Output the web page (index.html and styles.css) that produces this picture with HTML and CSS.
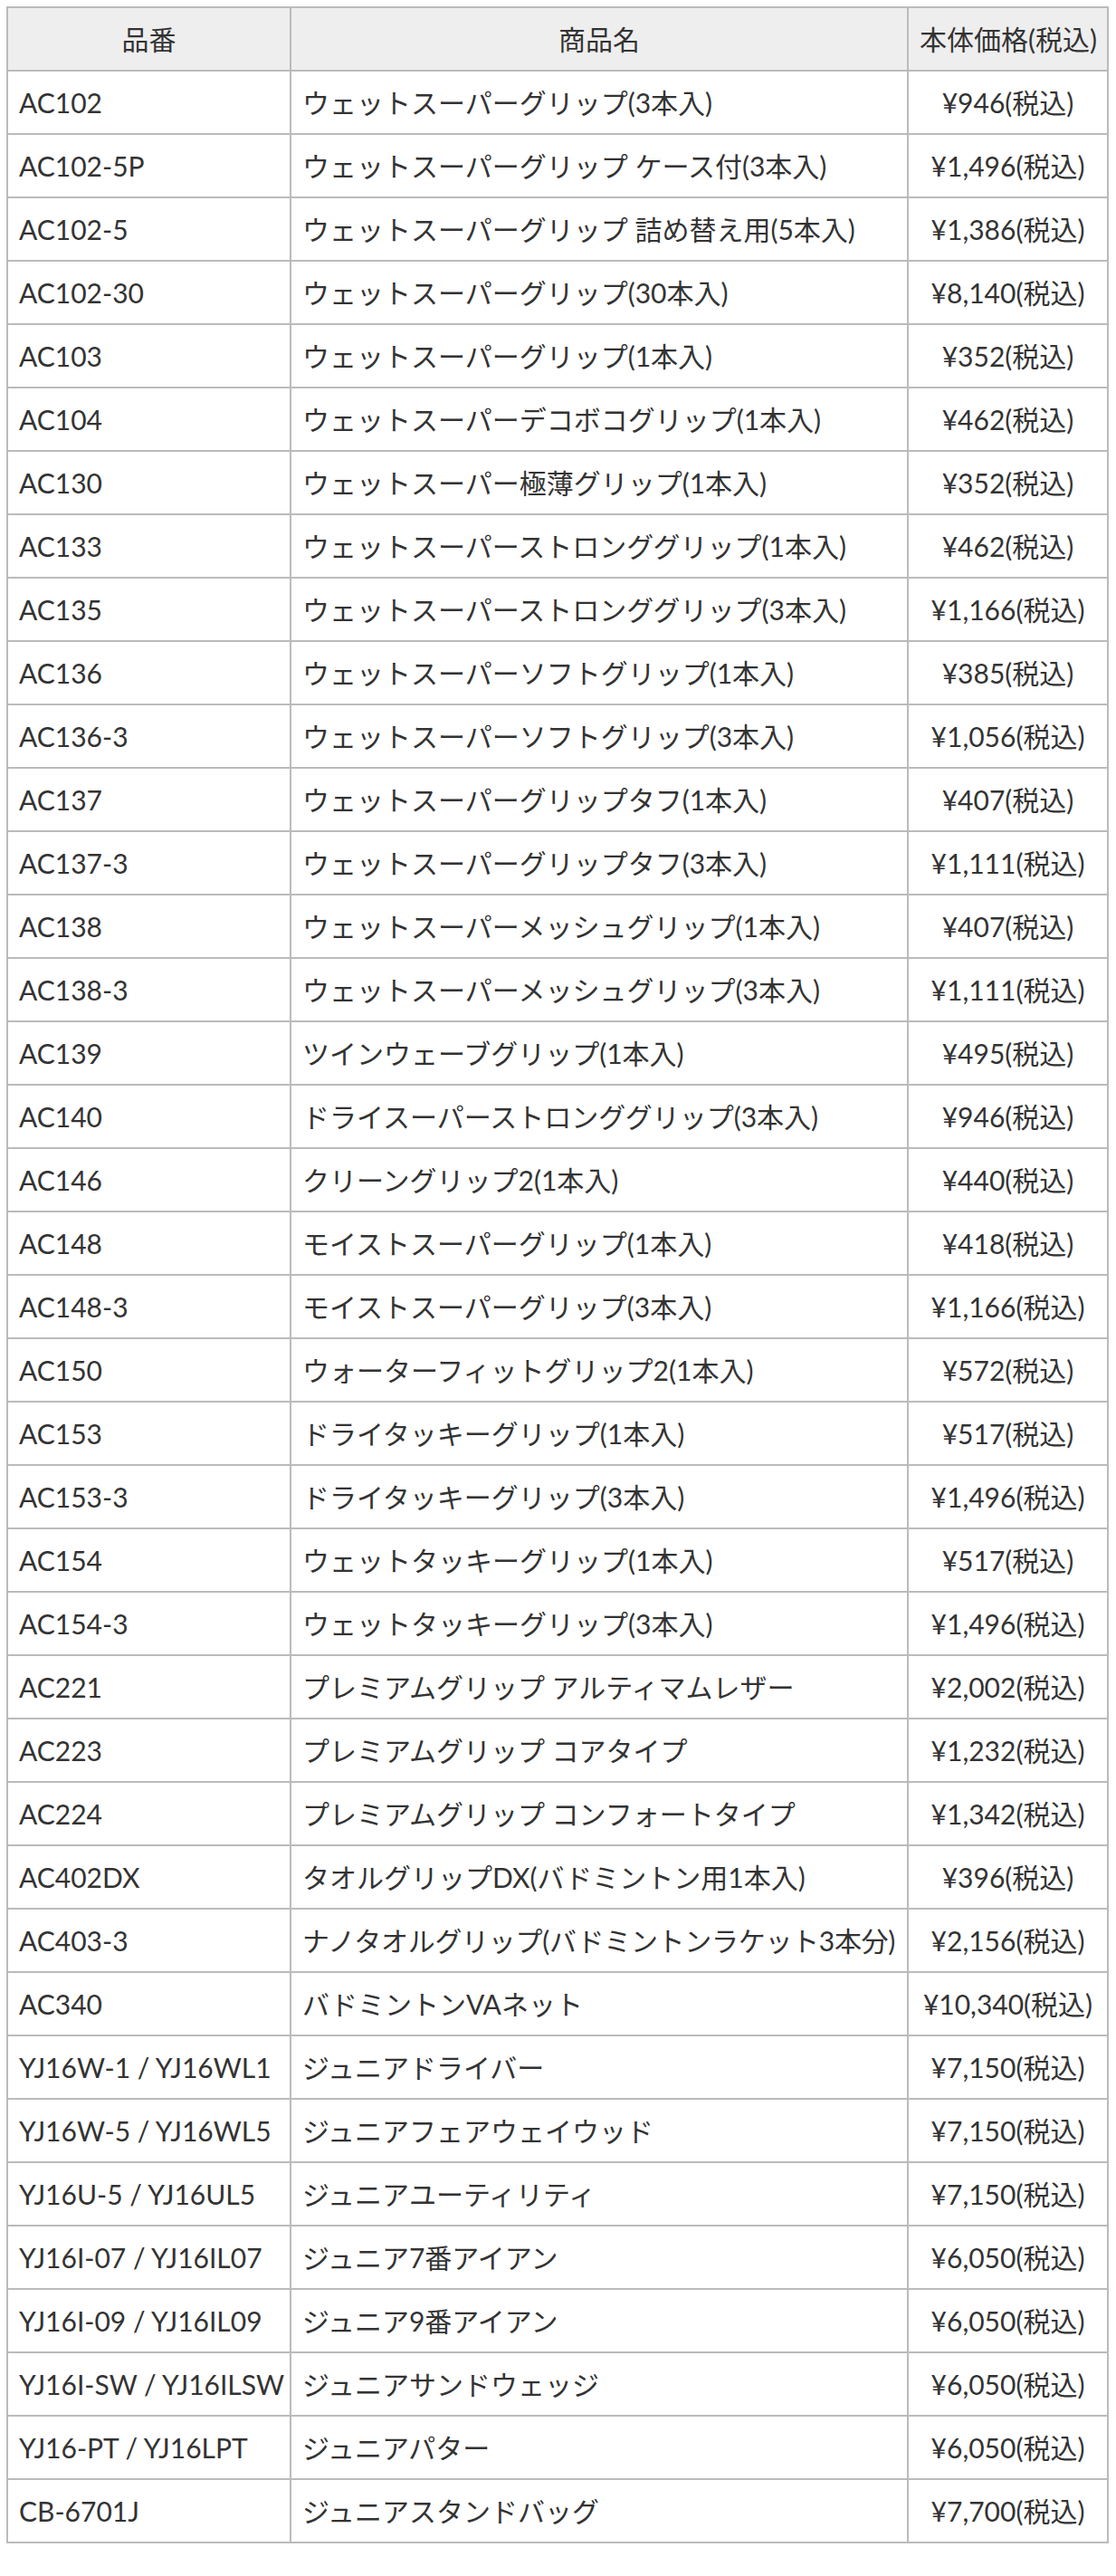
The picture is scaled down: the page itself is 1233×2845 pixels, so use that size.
FILE: index.html
```html
<!DOCTYPE html>
<html lang="ja">
<head>
<meta charset="utf-8">
<title>グリップ一覧</title>
<link rel="stylesheet" href="styles.css">
</head>
<body>
<table class="price-table">
  <colgroup>
    <col class="col-code">
    <col class="col-name">
    <col class="col-price">
  </colgroup>
  <thead>
    <tr><th>品番</th><th>商品名</th><th>本体価格(税込)</th></tr>
  </thead>
  <tbody>
    <tr><td>AC102</td><td>ウェットスーパーグリップ(3本入)</td><td class="price">¥946(税込)</td></tr>
    <tr><td>AC102-5P</td><td>ウェットスーパーグリップ ケース付(3本入)</td><td class="price">¥1,496(税込)</td></tr>
    <tr><td>AC102-5</td><td>ウェットスーパーグリップ 詰め替え用(5本入)</td><td class="price">¥1,386(税込)</td></tr>
    <tr><td>AC102-30</td><td>ウェットスーパーグリップ(30本入)</td><td class="price">¥8,140(税込)</td></tr>
    <tr><td>AC103</td><td>ウェットスーパーグリップ(1本入)</td><td class="price">¥352(税込)</td></tr>
    <tr><td>AC104</td><td>ウェットスーパーデコボコグリップ(1本入)</td><td class="price">¥462(税込)</td></tr>
    <tr><td>AC130</td><td>ウェットスーパー極薄グリップ(1本入)</td><td class="price">¥352(税込)</td></tr>
    <tr><td>AC133</td><td>ウェットスーパーストロンググリップ(1本入)</td><td class="price">¥462(税込)</td></tr>
    <tr><td>AC135</td><td>ウェットスーパーストロンググリップ(3本入)</td><td class="price">¥1,166(税込)</td></tr>
    <tr><td>AC136</td><td>ウェットスーパーソフトグリップ(1本入)</td><td class="price">¥385(税込)</td></tr>
    <tr><td>AC136-3</td><td>ウェットスーパーソフトグリップ(3本入)</td><td class="price">¥1,056(税込)</td></tr>
    <tr><td>AC137</td><td>ウェットスーパーグリップタフ(1本入)</td><td class="price">¥407(税込)</td></tr>
    <tr><td>AC137-3</td><td>ウェットスーパーグリップタフ(3本入)</td><td class="price">¥1,111(税込)</td></tr>
    <tr><td>AC138</td><td>ウェットスーパーメッシュグリップ(1本入)</td><td class="price">¥407(税込)</td></tr>
    <tr><td>AC138-3</td><td>ウェットスーパーメッシュグリップ(3本入)</td><td class="price">¥1,111(税込)</td></tr>
    <tr><td>AC139</td><td>ツインウェーブグリップ(1本入)</td><td class="price">¥495(税込)</td></tr>
    <tr><td>AC140</td><td>ドライスーパーストロンググリップ(3本入)</td><td class="price">¥946(税込)</td></tr>
    <tr><td>AC146</td><td>クリーングリップ2(1本入)</td><td class="price">¥440(税込)</td></tr>
    <tr><td>AC148</td><td>モイストスーパーグリップ(1本入)</td><td class="price">¥418(税込)</td></tr>
    <tr><td>AC148-3</td><td>モイストスーパーグリップ(3本入)</td><td class="price">¥1,166(税込)</td></tr>
    <tr><td>AC150</td><td>ウォーターフィットグリップ2(1本入)</td><td class="price">¥572(税込)</td></tr>
    <tr><td>AC153</td><td>ドライタッキーグリップ(1本入)</td><td class="price">¥517(税込)</td></tr>
    <tr><td>AC153-3</td><td>ドライタッキーグリップ(3本入)</td><td class="price">¥1,496(税込)</td></tr>
    <tr><td>AC154</td><td>ウェットタッキーグリップ(1本入)</td><td class="price">¥517(税込)</td></tr>
    <tr><td>AC154-3</td><td>ウェットタッキーグリップ(3本入)</td><td class="price">¥1,496(税込)</td></tr>
    <tr><td>AC221</td><td>プレミアムグリップ アルティマムレザー</td><td class="price">¥2,002(税込)</td></tr>
    <tr><td>AC223</td><td>プレミアムグリップ コアタイプ</td><td class="price">¥1,232(税込)</td></tr>
    <tr><td>AC224</td><td>プレミアムグリップ コンフォートタイプ</td><td class="price">¥1,342(税込)</td></tr>
    <tr><td>AC402DX</td><td>タオルグリップDX(バドミントン用1本入)</td><td class="price">¥396(税込)</td></tr>
    <tr><td>AC403-3</td><td><span class="narrow">ナノタオルグリップ(バドミントンラケット3本分)</span></td><td class="price">¥2,156(税込)</td></tr>
    <tr><td>AC340</td><td>バドミントンVAネット</td><td class="price">¥10,340(税込)</td></tr>
    <tr><td>YJ16W-1 / YJ16WL1</td><td>ジュニアドライバー</td><td class="price">¥7,150(税込)</td></tr>
    <tr><td>YJ16W-5 / YJ16WL5</td><td>ジュニアフェアウェイウッド</td><td class="price">¥7,150(税込)</td></tr>
    <tr><td>YJ16U-5 / YJ16UL5</td><td>ジュニアユーティリティ</td><td class="price">¥7,150(税込)</td></tr>
    <tr><td>YJ16I-07 / YJ16IL07</td><td>ジュニア7番アイアン</td><td class="price">¥6,050(税込)</td></tr>
    <tr><td>YJ16I-09 / YJ16IL09</td><td>ジュニア9番アイアン</td><td class="price">¥6,050(税込)</td></tr>
    <tr><td>YJ16I-SW / YJ16ILSW</td><td>ジュニアサンドウェッジ</td><td class="price">¥6,050(税込)</td></tr>
    <tr><td>YJ16-PT / YJ16LPT</td><td>ジュニアパター</td><td class="price">¥6,050(税込)</td></tr>
    <tr><td>CB-6701J</td><td>ジュニアスタンドバッグ</td><td class="price">¥7,700(税込)</td></tr>
  </tbody>
</table>
</body>
</html>
```

FILE: styles.css
```css
html, body {
  margin: 0;
  padding: 0;
  background: #fff;
}
body {
  padding: 7px 0 0 7px;
  font-family: Lato, "Noto Sans CJK JP", sans-serif;
  color: #333;
}
.price-table {
  border-collapse: collapse;
  table-layout: fixed;
  width: 1216px;
  font-size: 30px;
}
.col-code { width: 313px; }
.col-name { width: 682px; }
.col-price { width: 221px; }
.price-table th,
.price-table td {
  border: 2px solid #bbb;
  height: 70px;
  padding: 0 12px;
  box-sizing: border-box;
  vertical-align: middle;
  white-space: nowrap;
  line-height: 1.2;
}
.price-table th {
  background: #eee;
  font-weight: normal;
  text-align: center;
}
.price-table td {
  text-align: left;
}
.price-table td.price {
  text-align: center;
}
.narrow {
  display: inline-block;
  letter-spacing: -0.3px;
}
```
